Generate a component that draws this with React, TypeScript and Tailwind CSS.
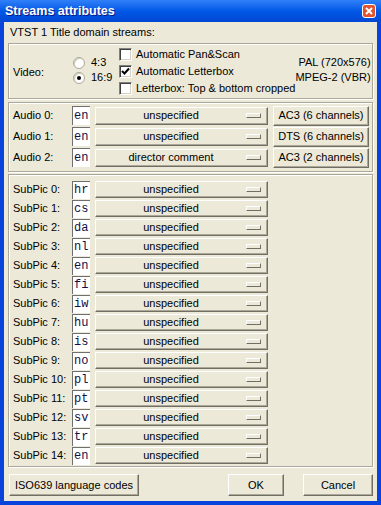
import React from 'react'

const raised =
  'border border-t-white border-l-white border-b-[#716f64] border-r-[#716f64] shadow-[inset_-1px_-1px_0_#aca899] bg-[#ece9d8]'
const groupBox = 'border border-[#aca899] shadow-[inset_1px_1px_0_#fff,1px_1px_0_#fff]'

const audio = [
  { code: 'en', desc: 'unspecified', fmt: 'AC3 (6 channels)' },
  { code: 'en', desc: 'unspecified', fmt: 'DTS (6 channels)' },
  { code: 'en', desc: 'director comment', fmt: 'AC3 (2 channels)' },
]

const subpics = ['hr', 'cs', 'da', 'nl', 'en', 'fi', 'iw', 'hu', 'is', 'no', 'pl', 'pt', 'sv', 'tr', 'en']

function LangBox({ code, h }: { code: string; h: string }) {
  return (
    <div
      className={`shrink-0 w-[18px] ${h} bg-white border-l border-t border-[#6f6f6f] flex items-center pl-[1px] font-['Liberation_Mono',monospace] text-[12px] text-[#10104a] leading-none`}
    >
      {code}
    </div>
  )
}

function Combo({ text, h }: { text: string; h: string }) {
  return (
    <div className={`shrink-0 w-[173px] ${h} ${raised} flex items-center ml-[5px]`}>
      <span className="flex-1 text-center leading-none whitespace-nowrap">{text}</span>
      <div className="w-[15px] h-[5px] mr-[6px] border border-t-white border-l-white border-b-[#716f64] border-r-[#716f64] bg-[#ece9d8]" />
    </div>
  )
}

function Radio({ checked }: { checked?: boolean }) {
  return (
    <div className="shrink-0 w-[12px] h-[12px] rounded-full bg-white border border-[#aca899] shadow-[inset_1px_1px_0_#d0cdc0] flex items-center justify-center">
      {checked && <div className="w-[4px] h-[4px] rounded-full bg-black" />}
    </div>
  )
}

function Check({ checked }: { checked?: boolean }) {
  return (
    <div className="shrink-0 w-[13px] h-[13px] bg-white border border-t-[#808080] border-l-[#808080] border-b-white border-r-white shadow-[inset_1px_1px_0_#404040,inset_-1px_-1px_0_#d4d0c8] flex items-center justify-center">
      {checked && (
        <svg width="9" height="9" viewBox="0 0 9 9">
          <path d="M1 4 L3.5 6.5 L8 1.5" fill="none" stroke="#000" strokeWidth="2" />
        </svg>
      )}
    </div>
  )
}

export default function App() {
  return (
    <div className="w-[381px] h-[505px] bg-[#0843db] flex flex-col font-['Liberation_Sans',Arial,sans-serif] text-[11px] text-black whitespace-nowrap">
      {/* title bar */}
      <div className="h-[22px] bg-gradient-to-b from-[#2f80f8] via-[#0058e6] to-[#0346d4] flex items-center pl-[5px] pr-[5px]">
        <span className="text-white font-bold text-[12.5px] [text-shadow:1px_1px_#0a1883]">Streams attributes</span>
        <div className="ml-auto w-[14px] h-[14px] rounded-[3px] border border-white bg-[#e0542f] flex items-center justify-center">
          <svg width="8" height="8" viewBox="0 0 8 8">
            <path d="M1 1 L7 7 M7 1 L1 7" stroke="#fff" strokeWidth="2" />
          </svg>
        </div>
      </div>

      {/* client */}
      <div className="flex-1 mx-[4px] mb-[4px] bg-[#ece9d8] flex flex-col px-[4px]">
        <div className="h-[21px] flex items-center pl-[2px]">VTST 1 Title domain streams:</div>

        {/* video */}
        <div className={`h-[56px] ${groupBox} flex items-center pl-[4px] pr-[4px]`}>
          <div className="shrink-0 w-[60px] mt-[2px]">Video:</div>
          <div className="shrink-0 w-[46px] flex flex-col mt-[-2px]">
            <div className="h-[15px] flex items-center gap-[6px]">
              <Radio />
              <span>4:3</span>
            </div>
            <div className="h-[15px] flex items-center gap-[6px]">
              <Radio checked />
              <span>16:9</span>
            </div>
          </div>
          <div className="shrink-0 flex flex-col">
            <div className="h-[17px] flex items-center gap-[4px]">
              <Check />
              <span>Automatic Pan&amp;Scan</span>
            </div>
            <div className="h-[17px] flex items-center gap-[4px]">
              <Check checked />
              <span>Automatic Letterbox</span>
            </div>
            <div className="h-[17px] flex items-center gap-[4px]">
              <Check />
              <span>Letterbox: Top &amp; bottom cropped</span>
            </div>
          </div>
          <div className="shrink-0 ml-auto text-right leading-[15px] mt-[-2px]">
            <div>PAL (720x576)</div>
            <div>MPEG-2 (VBR)</div>
          </div>
        </div>

        {/* audio */}
        <div className={`mt-[3px] h-[70px] ${groupBox} pt-[2px] pl-[4px] flex flex-col`}>
          {audio.map((a, i) => (
            <div key={i} className="h-[21px] flex items-center">
              <span className="shrink-0 w-[59px]">Audio {i}:</span>
              <LangBox code={a.code} h="h-[19px]" />
              <Combo text={a.desc} h="h-[18px]" />
              <div className={`shrink-0 ml-[5px] w-[96px] h-[20px] ${raised} flex items-center justify-center`}>
                {a.fmt}
              </div>
            </div>
          ))}
        </div>

        {/* subpictures */}
        <div className={`mt-[2px] h-[293px] ${groupBox} pt-[5px] pl-[4px] flex flex-col`}>
          {subpics.map((c, i) => (
            <div key={i} className="h-[19px] flex items-center">
              <span className="shrink-0 w-[59px]">SubPic {i}:</span>
              <LangBox code={c} h="h-[18px]" />
              <Combo text="unspecified" h="h-[17px]" />
            </div>
          ))}
        </div>

        {/* buttons */}
        <div className="mt-[7px] h-[22px] flex">
          <div className={`shrink-0 ml-[1px] w-[130px] h-[22px] ${raised} flex items-center justify-center`}>
            ISO639 language codes
          </div>
          <div className={`shrink-0 ml-auto w-[56px] h-[22px] ${raised} flex items-center justify-center`}>OK</div>
          <div className={`shrink-0 ml-[19px] w-[70px] h-[22px] ${raised} flex items-center justify-center`}>
            Cancel
          </div>
        </div>
      </div>
    </div>
  )
}
